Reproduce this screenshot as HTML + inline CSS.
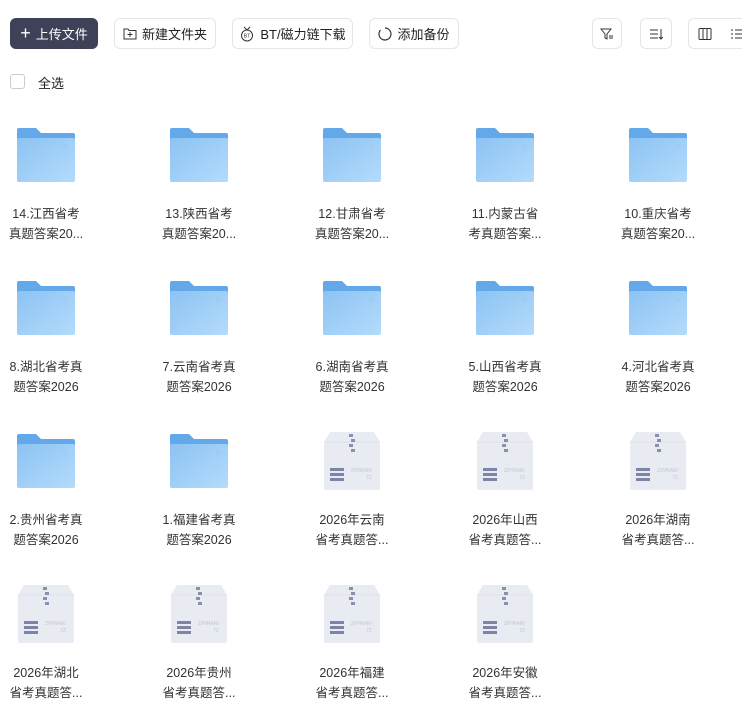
<!DOCTYPE html>
<html><head><meta charset="utf-8"><style>
body{margin:0;width:742px;height:712px;overflow:hidden;background:#fff;font-family:"Liberation Sans","Noto Sans CJK SC",sans-serif;color:#333;position:relative}
.btn{position:absolute;top:18px;height:31px;border:1px solid #e6e6ea;border-radius:6px;box-sizing:border-box;font-size:13px;display:flex;align-items:center;justify-content:center;gap:5px;color:#222;background:#fff}
.item{position:absolute;width:120px;text-align:center;font-size:12.5px;line-height:20px;color:#333}
.item svg{display:block;margin:0 auto}
.name{margin-top:22px}
</style></head><body>
<div class="btn" style="left:10px;width:88px;background:#3e4157;border-color:#3e4157;color:#fff"><span style="font-size:18px;font-weight:300">+</span>上传文件</div>
<div class="btn" style="left:114px;width:102px"><svg width="14" height="13" viewBox="0 0 14 13"><path d="M1 2h4l1 1.5h7v8.5H1z" fill="none" stroke="#333"/><path d="M7 5v5M4.5 7.5h5" stroke="#333"/></svg>新建文件夹</div>
<div class="btn" style="left:232px;width:121px"><svg width="16" height="16" viewBox="0 0 16 16"><circle cx="8" cy="9.5" r="5.5" fill="none" stroke="#333"/><path d="M5 1l3 3 3-3" fill="none" stroke="#333"/><text x="8" y="11.5" font-size="5" text-anchor="middle" fill="#333">BT</text></svg>BT/磁力链下载</div>
<div class="btn" style="left:369px;width:90px"><svg width="14" height="14" viewBox="0 0 14 14"><path d="M7 1a6 6 0 1 1-4.5 2" fill="none" stroke="#333" stroke-width="1.2"/></svg>添加备份</div>
<div class="btn" style="left:592px;width:30px"><svg width="14" height="14" viewBox="0 0 14 14"><path d="M1 2h10L7 7v5L5 11V7z" fill="none" stroke="#333"/><path d="M9 9h4M9 11h4" stroke="#333"/></svg></div>
<div class="btn" style="left:640px;width:32px"><svg width="14" height="14" viewBox="0 0 14 14"><path d="M1 3h8M1 7h8M1 11h8M12 2v10M10 10l2 2 2-2" fill="none" stroke="#333"/></svg></div>
<div class="btn" style="left:688px;width:70px;justify-content:flex-start;padding-left:9px;gap:18px"><svg width="14" height="14" viewBox="0 0 14 14"><rect x="1" y="1.5" width="12" height="11" rx="1" fill="none" stroke="#333"/><path d="M5 1.5v11M9 1.5v11" stroke="#333"/></svg><svg width="14" height="14" viewBox="0 0 14 14"><path d="M1 3h2M5 3h9M1 7h2M5 7h9M1 11h2M5 11h9" stroke="#333"/></svg></div>
<div style="position:absolute;left:10px;top:74px;width:13px;height:13px;border:1px solid #ccc;border-radius:3px"></div>
<div style="position:absolute;left:38px;top:73px;font-size:13px;color:#222">全选</div>
<svg width="0" height="0" style="position:absolute"><defs>
<linearGradient id="fg" x1="0" y1="0" x2="1" y2="1"><stop offset="0" stop-color="#8cc3f3"/><stop offset="1" stop-color="#b4dbfb"/></linearGradient>
<symbol id="folder" viewBox="0 0 58 54"><path d="M2 0h17l5 5h32a2 2 0 0 1 2 2v45H2a2 2 0 0 1-2-2V2a2 2 0 0 1 2-2z" fill="#63a9ea"/><path d="M0 12a2 2 0 0 1 2-2h54a2 2 0 0 1 2 2v40a2 2 0 0 1-2 2H2a2 2 0 0 1-2-2z" fill="url(#fg)"/><path d="M46 17h5M46 20h5" stroke="#9cc7ee"/></symbol>
<symbol id="zip" viewBox="0 0 56 58"><path d="M6 0h44l6 10v46a2 2 0 0 1-2 2H2a2 2 0 0 1-2-2V10z" fill="#e9ebf3"/><path d="M0 10h56" stroke="#dde0ea"/><rect x="25" y="2" width="4" height="3" fill="#8a8fb0"/><rect x="27" y="7" width="4" height="3" fill="#8a8fb0"/><rect x="25" y="12" width="4" height="3" fill="#8a8fb0"/><rect x="27" y="17" width="4" height="3" fill="#8a8fb0"/><rect x="6" y="36" width="14" height="3" fill="#7e84a8"/><rect x="6" y="41" width="14" height="3" fill="#7e84a8"/><rect x="6" y="46" width="14" height="3" fill="#7e84a8"/><text x="48" y="40" font-size="5" fill="#c0c4d6" text-anchor="end">ZIP/RAR/</text><text x="48" y="47" font-size="5" fill="#c0c4d6" text-anchor="end">7Z</text></symbol>
</defs></svg>

<div class="item" style="left:-14px;top:128px"><svg width="58" height="54"><use href="#folder"/></svg><div class="name">14.江西省考<br>真题答案20...</div></div>
<div class="item" style="left:139px;top:128px"><svg width="58" height="54"><use href="#folder"/></svg><div class="name">13.陕西省考<br>真题答案20...</div></div>
<div class="item" style="left:292px;top:128px"><svg width="58" height="54"><use href="#folder"/></svg><div class="name">12.甘肃省考<br>真题答案20...</div></div>
<div class="item" style="left:445px;top:128px"><svg width="58" height="54"><use href="#folder"/></svg><div class="name">11.内蒙古省<br>考真题答案...</div></div>
<div class="item" style="left:598px;top:128px"><svg width="58" height="54"><use href="#folder"/></svg><div class="name">10.重庆省考<br>真题答案20...</div></div>

<div class="item" style="left:-14px;top:281px"><svg width="58" height="54"><use href="#folder"/></svg><div class="name">8.湖北省考真<br>题答案2026</div></div>
<div class="item" style="left:139px;top:281px"><svg width="58" height="54"><use href="#folder"/></svg><div class="name">7.云南省考真<br>题答案2026</div></div>
<div class="item" style="left:292px;top:281px"><svg width="58" height="54"><use href="#folder"/></svg><div class="name">6.湖南省考真<br>题答案2026</div></div>
<div class="item" style="left:445px;top:281px"><svg width="58" height="54"><use href="#folder"/></svg><div class="name">5.山西省考真<br>题答案2026</div></div>
<div class="item" style="left:598px;top:281px"><svg width="58" height="54"><use href="#folder"/></svg><div class="name">4.河北省考真<br>题答案2026</div></div>

<div class="item" style="left:-14px;top:434px"><svg width="58" height="54"><use href="#folder"/></svg><div class="name">2.贵州省考真<br>题答案2026</div></div>
<div class="item" style="left:139px;top:434px"><svg width="58" height="54"><use href="#folder"/></svg><div class="name">1.福建省考真<br>题答案2026</div></div>
<div class="item" style="left:292px;top:432px"><svg width="56" height="58"><use href="#zip"/></svg><div class="name" style="margin-top:20px">2026年云南<br>省考真题答...</div></div>
<div class="item" style="left:445px;top:432px"><svg width="56" height="58"><use href="#zip"/></svg><div class="name" style="margin-top:20px">2026年山西<br>省考真题答...</div></div>
<div class="item" style="left:598px;top:432px"><svg width="56" height="58"><use href="#zip"/></svg><div class="name" style="margin-top:20px">2026年湖南<br>省考真题答...</div></div>

<div class="item" style="left:-14px;top:585px"><svg width="56" height="58"><use href="#zip"/></svg><div class="name" style="margin-top:20px">2026年湖北<br>省考真题答...</div></div>
<div class="item" style="left:139px;top:585px"><svg width="56" height="58"><use href="#zip"/></svg><div class="name" style="margin-top:20px">2026年贵州<br>省考真题答...</div></div>
<div class="item" style="left:292px;top:585px"><svg width="56" height="58"><use href="#zip"/></svg><div class="name" style="margin-top:20px">2026年福建<br>省考真题答...</div></div>
<div class="item" style="left:445px;top:585px"><svg width="56" height="58"><use href="#zip"/></svg><div class="name" style="margin-top:20px">2026年安徽<br>省考真题答...</div></div>
</body></html>
